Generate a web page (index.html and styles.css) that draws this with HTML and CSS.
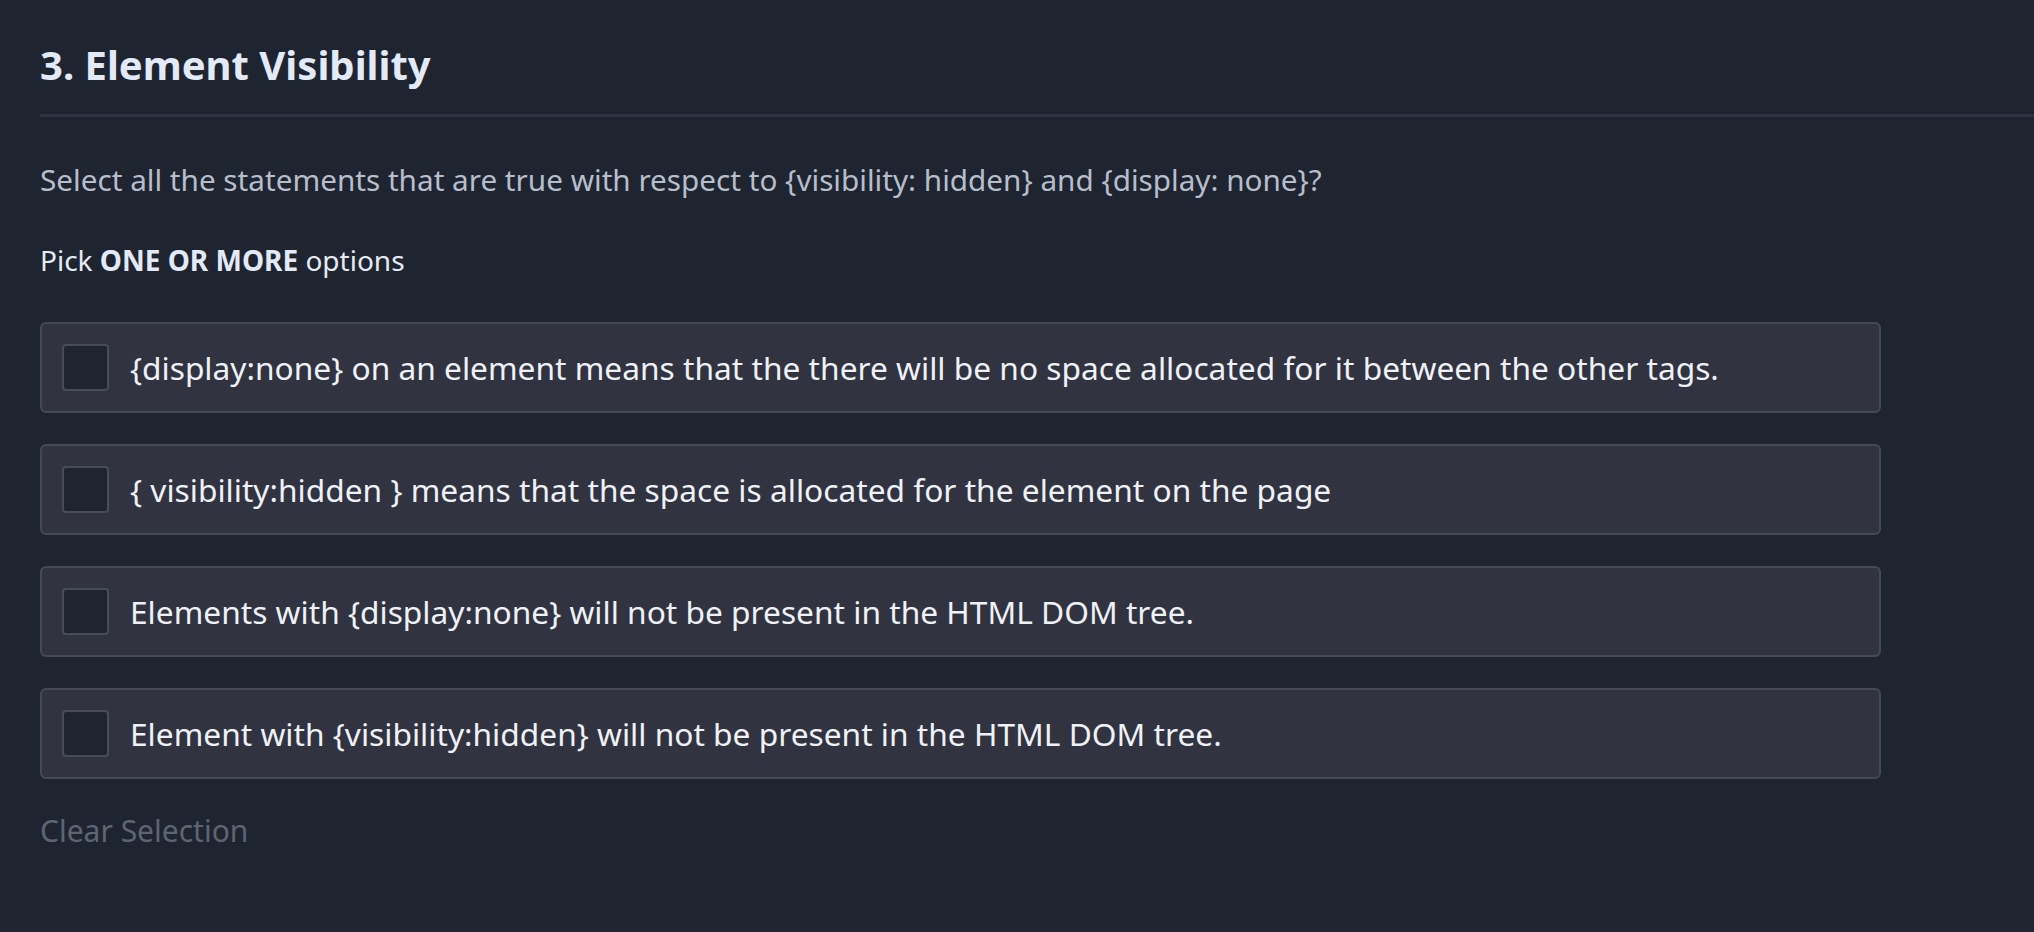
FILE: index.html
```html
<!DOCTYPE html>
<html lang="en">
<head>
<meta charset="utf-8">
<title>Element Visibility</title>
<link rel="stylesheet" href="styles.css">
</head>
<body>
<main class="question">
  <header class="q-header">
    <h1 class="q-title">3. Element Visibility</h1>
  </header>
  <p class="q-text">Select all the statements that are true with respect to {visibility: hidden} and {display: none}?</p>
  <p class="q-hint">Pick <strong>ONE OR MORE</strong> options</p>
  <div class="options">
    <label class="option"><span class="checkbox"></span><span class="option-text">{display:none} on an element means that the there will be no space allocated for it between the other tags.</span></label>
    <label class="option"><span class="checkbox"></span><span class="option-text">{ visibility:hidden } means that the space is allocated for the element on the page</span></label>
    <label class="option"><span class="checkbox"></span><span class="option-text">Elements with {display:none} will not be present in the HTML DOM tree.</span></label>
    <label class="option"><span class="checkbox"></span><span class="option-text">Element with {visibility:hidden} will not be present in the HTML DOM tree.</span></label>
  </div>
  <div class="clear">Clear Selection</div>
</main>
</body>
</html>
```

FILE: styles.css
```css
html, body {
  margin: 0;
  padding: 0;
  background: #1f2431;
  height: 100%;
}
body {
  font-family: "Noto Sans", "Open Sans", sans-serif;
  color: #eef1f6;
}
.question {
  padding: 37px 0 0 40px;
}
.q-header {
  padding-bottom: 21px;
  border-bottom: 3px solid #2f3240;
}
.q-title {
  margin: 0;
  font-size: 40px;
  line-height: 56px;
  font-weight: 700;
  color: #e3eaf7;
}
.q-text {
  margin: 44px 0 0;
  font-size: 29.7px;
  line-height: 38px;
  color: #b7becb;
}
.q-hint {
  margin: 44px 0 0;
  font-size: 28px;
  line-height: 35px;
  color: #e6ebf3;
}
.q-hint strong {
  font-weight: 700;
  color: #e3eaf7;
}
.options {
  margin-top: 44px;
  width: 1841px;
  display: flex;
  flex-direction: column;
  gap: 31px;
}
.option {
  box-sizing: border-box;
  height: 91px;
  display: flex;
  align-items: center;
  gap: 21px;
  padding: 0 20px;
  background: #313440;
  border: 2px solid #454956;
  border-radius: 6px;
}
.checkbox {
  box-sizing: border-box;
  flex: 0 0 47px;
  width: 47px;
  height: 47px;
  background: #1f2431;
  border: 2px solid #484c59;
  border-radius: 4px;
}
.option-text {
  font-size: 31.7px;
  line-height: 43px;
  color: #eef1f6;
}
.clear {
  margin-top: 31px;
  font-size: 30px;
  line-height: 41px;
  color: #5e6572;
}
```
